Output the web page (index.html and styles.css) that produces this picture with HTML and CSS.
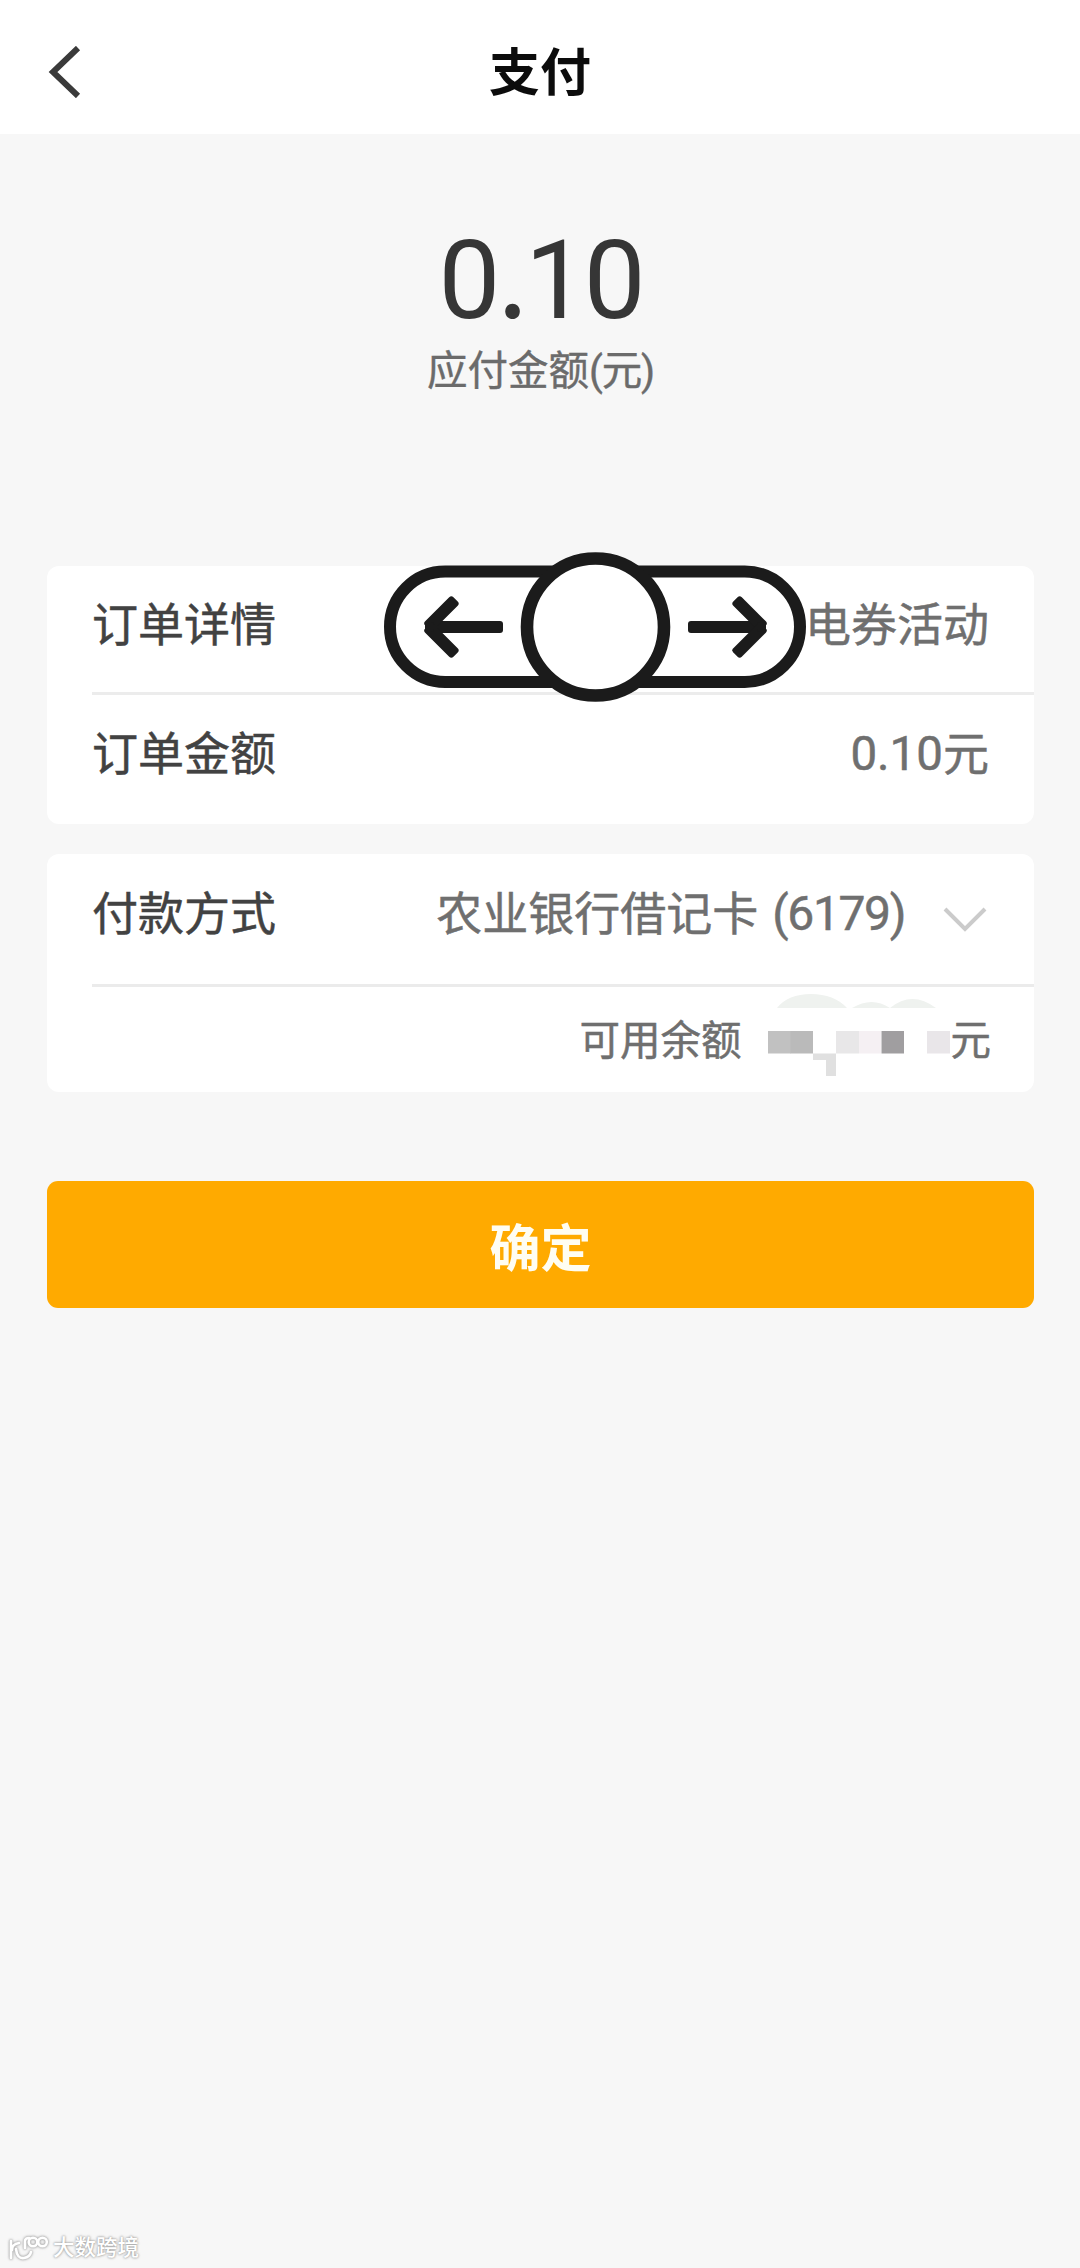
FILE: index.html
```html
<!DOCTYPE html>
<html lang="zh-CN">
<head>
<meta charset="utf-8">
<title>支付</title>
<link rel="stylesheet" href="styles.css">
</head>
<body>
<div class="page">
  <header class="header">
    <svg class="back" viewBox="0 0 34 52"><path d="M31 2 6 26 31 50" fill="none" stroke="#3a3a3a" stroke-width="6"/></svg>
    <h1 class="title">支付</h1>
  </header>
  <main class="main">
    <section class="summary">
      <div class="amount">0<span class="dot">.</span>10</div>
      <div class="caption">应付金额<span class="unit">(元)</span></div>
    </section>
    <section class="card">
      <div class="row row-detail">
        <span class="label">订单详情</span>
        <span class="value">电券活动</span>
        <svg class="slider" viewBox="0 0 424 152">
          <rect x="7" y="20.5" width="410" height="110.5" rx="55.2" fill="#fff" stroke="#1b1b1b" stroke-width="12"/>
          <circle cx="212.5" cy="76" r="68.5" fill="#fff" stroke="#1b1b1b" stroke-width="12.6"/>
          <g id="arrow" fill="#1b1b1b">
            <rect x="44" y="70" width="76" height="12" rx="3"/>
            <rect x="-1" y="-6" width="40" height="12" rx="3" transform="translate(45 76) rotate(-45)"/>
            <rect x="-1" y="-6" width="40" height="12" rx="3" transform="translate(45 76) rotate(45)"/>
            <rect x="42" y="71" width="9" height="10" rx="3"/>
          </g>
          <use href="#arrow" transform="translate(425 0) scale(-1 1)"/>
        </svg>
      </div>
      <div class="row row-total">
        <span class="label">订单金额</span>
        <span class="value"><span class="sum">0.10</span>元</span>
      </div>
    </section>
    <section class="card card-pay">
      <div class="row row-method">
        <span class="label">付款方式</span>
        <span class="value">农业银行借记卡<span class="digits">(6179)</span></span>
        <svg class="chevron" viewBox="0 0 44 26"><path d="M2 2 22 22 42 2" fill="none" stroke="#cbcbcb" stroke-width="4"/></svg>
      </div>
      <div class="row row-balance">
        <span class="value small">可用余额</span>
        <svg class="mosaic" viewBox="0 0 183 86">
          <path d="M9 16Q20 2 43 2T79 16Z M84 16Q104 4 122 16Z M122 16Q144-2 168 16Z" fill="#eff2ef"/>
          <rect x="0" y="39" width="23" height="22.500" fill="#c1c1c1"/>
          <rect x="22.500" y="39" width="22.500" height="22.500" fill="#bababa"/>
          <path d="M45 61.500H68V84H58V68H45Z" fill="#e0e0e0"/>
          <rect x="68" y="39" width="23" height="22.500" fill="#e8e7e8"/>
          <rect x="91" y="39" width="22" height="22.500" fill="#f5f0f3"/>
          <rect x="113.500" y="39" width="22.500" height="22.500" fill="#a09ea0"/>
          <rect x="159" y="39" width="23" height="22.500" fill="#e9e6e9"/>
        </svg>
        <span class="value small">元</span>
      </div>
    </section>
    <button class="confirm">确定</button>
  </main>
  <footer class="watermark">
    <svg class="logo" viewBox="0 0 42 30"><g fill="none" stroke="#fff" stroke-width="2.6" stroke-linecap="round"><path d="M4 8V25M12 10Q5 11 5 17M9 16Q10 26 17 25Q23 24 24 19"/><path d="M18 15V8Q18 5 22 5"/><circle cx="26" cy="9" r="4.300"/><circle cx="35.500" cy="9" r="4.300"/></g></svg>
    <span>大数跨境</span>
  </footer>
</div>
</body>
</html>
```
FILE: styles.css
```css
* { box-sizing: border-box; }
body {
  margin: 0;
  background: #f7f7f7;
  font-family: Roboto, "Noto Sans CJK SC", sans-serif;
}
.page {
  display: flex;
  flex-direction: column;
  width: 1080px;
  height: 2268px;
}
.header {
  display: grid;
  grid-template-columns: 96px 1fr 96px;
  align-items: center;
  height: 134px;
  padding-top: 10px;
  background: #fff;
}
.back { width: 34px; height: 52px; margin-left: 47px; }
.title {
  margin: 0;
  padding-top: 4px;
  text-align: center;
  font-size: 51px;
  line-height: 60px;
  font-weight: 700;
  color: #0c0c0c;
}
.main {
  flex: 1;
  display: flex;
  flex-direction: column;
  padding: 0 46px 0 47px;
}
.summary {
  height: 432px;
  padding-top: 71px;
  text-align: center;
}
.amount {
  height: 138px;
  font-size: 110px;
  line-height: 130px;
  letter-spacing: -3px;
  color: #363636;
}
.dot { font-family: "Noto Sans CJK SC", sans-serif; }
.caption {
  height: 56px;
  font-size: 40.5px;
  line-height: 56px;
  color: #6b6b6b;
  -webkit-text-stroke: 0.4px;
}
.unit { letter-spacing: -1.2px; }
.card {
  border-radius: 12px;
  background: #fff;
}
.row {
  display: flex;
  align-items: center;
  justify-content: space-between;
  margin-left: 45px;
  padding-right: 45px;
  font-size: 46px;
  line-height: 60px;
  -webkit-text-stroke: 0.5px;
}
.label { color: #424242; }
.value { color: #6f6f6f; }
.row-detail {
  position: relative;
  height: 129px;
  padding-bottom: 8px;
  border-bottom: 3px solid #ececec;
}
.slider {
  position: absolute;
  left: 291px;
  top: -15px;
  width: 424px;
  height: 152px;
}
.row-total { height: 129px; padding-bottom: 11px; }
.sum { font-size: 47.5px; }
.card-pay { margin-top: 30px; }
.row-method {
  height: 133px;
  padding-bottom: 10px;
  border-bottom: 3px solid #ebebeb;
}
.row-method .value { margin-left: auto; }
.digits { margin-left: 14px; font-size: 48px; letter-spacing: -1.4px; }
.chevron { width: 44px; height: 26px; margin: 12px 2px 0 38px; }
.row-balance { height: 105px; padding: 2px 43px 0 0; justify-content: flex-end; }
.small { font-size: 40.5px; }
.mosaic { width: 183px; height: 86px; margin: -11px 0 0 26px; }
.confirm {
  height: 127px;
  margin-top: 89px;
  padding: 1px 0 0;
  border: 0;
  border-radius: 11px;
  background: #ffaa00;
  color: #fffdf2;
  font: 700 51px/60px "Noto Sans CJK SC", sans-serif;
}
.watermark {
  display: flex;
  align-items: center;
  gap: 4px;
  height: 38px;
  margin-top: auto;
  padding: 0 0 2px 7px;
  color: #fff;
  font-size: 21.5px;
  line-height: 30px;
  font-weight: 500;
  text-shadow: 0 0 2px #999, 0 0 3px #aaa;
}
.logo { width: 42px; height: 30px; filter: drop-shadow(0 0 1px #aaa) drop-shadow(0 0 1px #bbb); }
```
